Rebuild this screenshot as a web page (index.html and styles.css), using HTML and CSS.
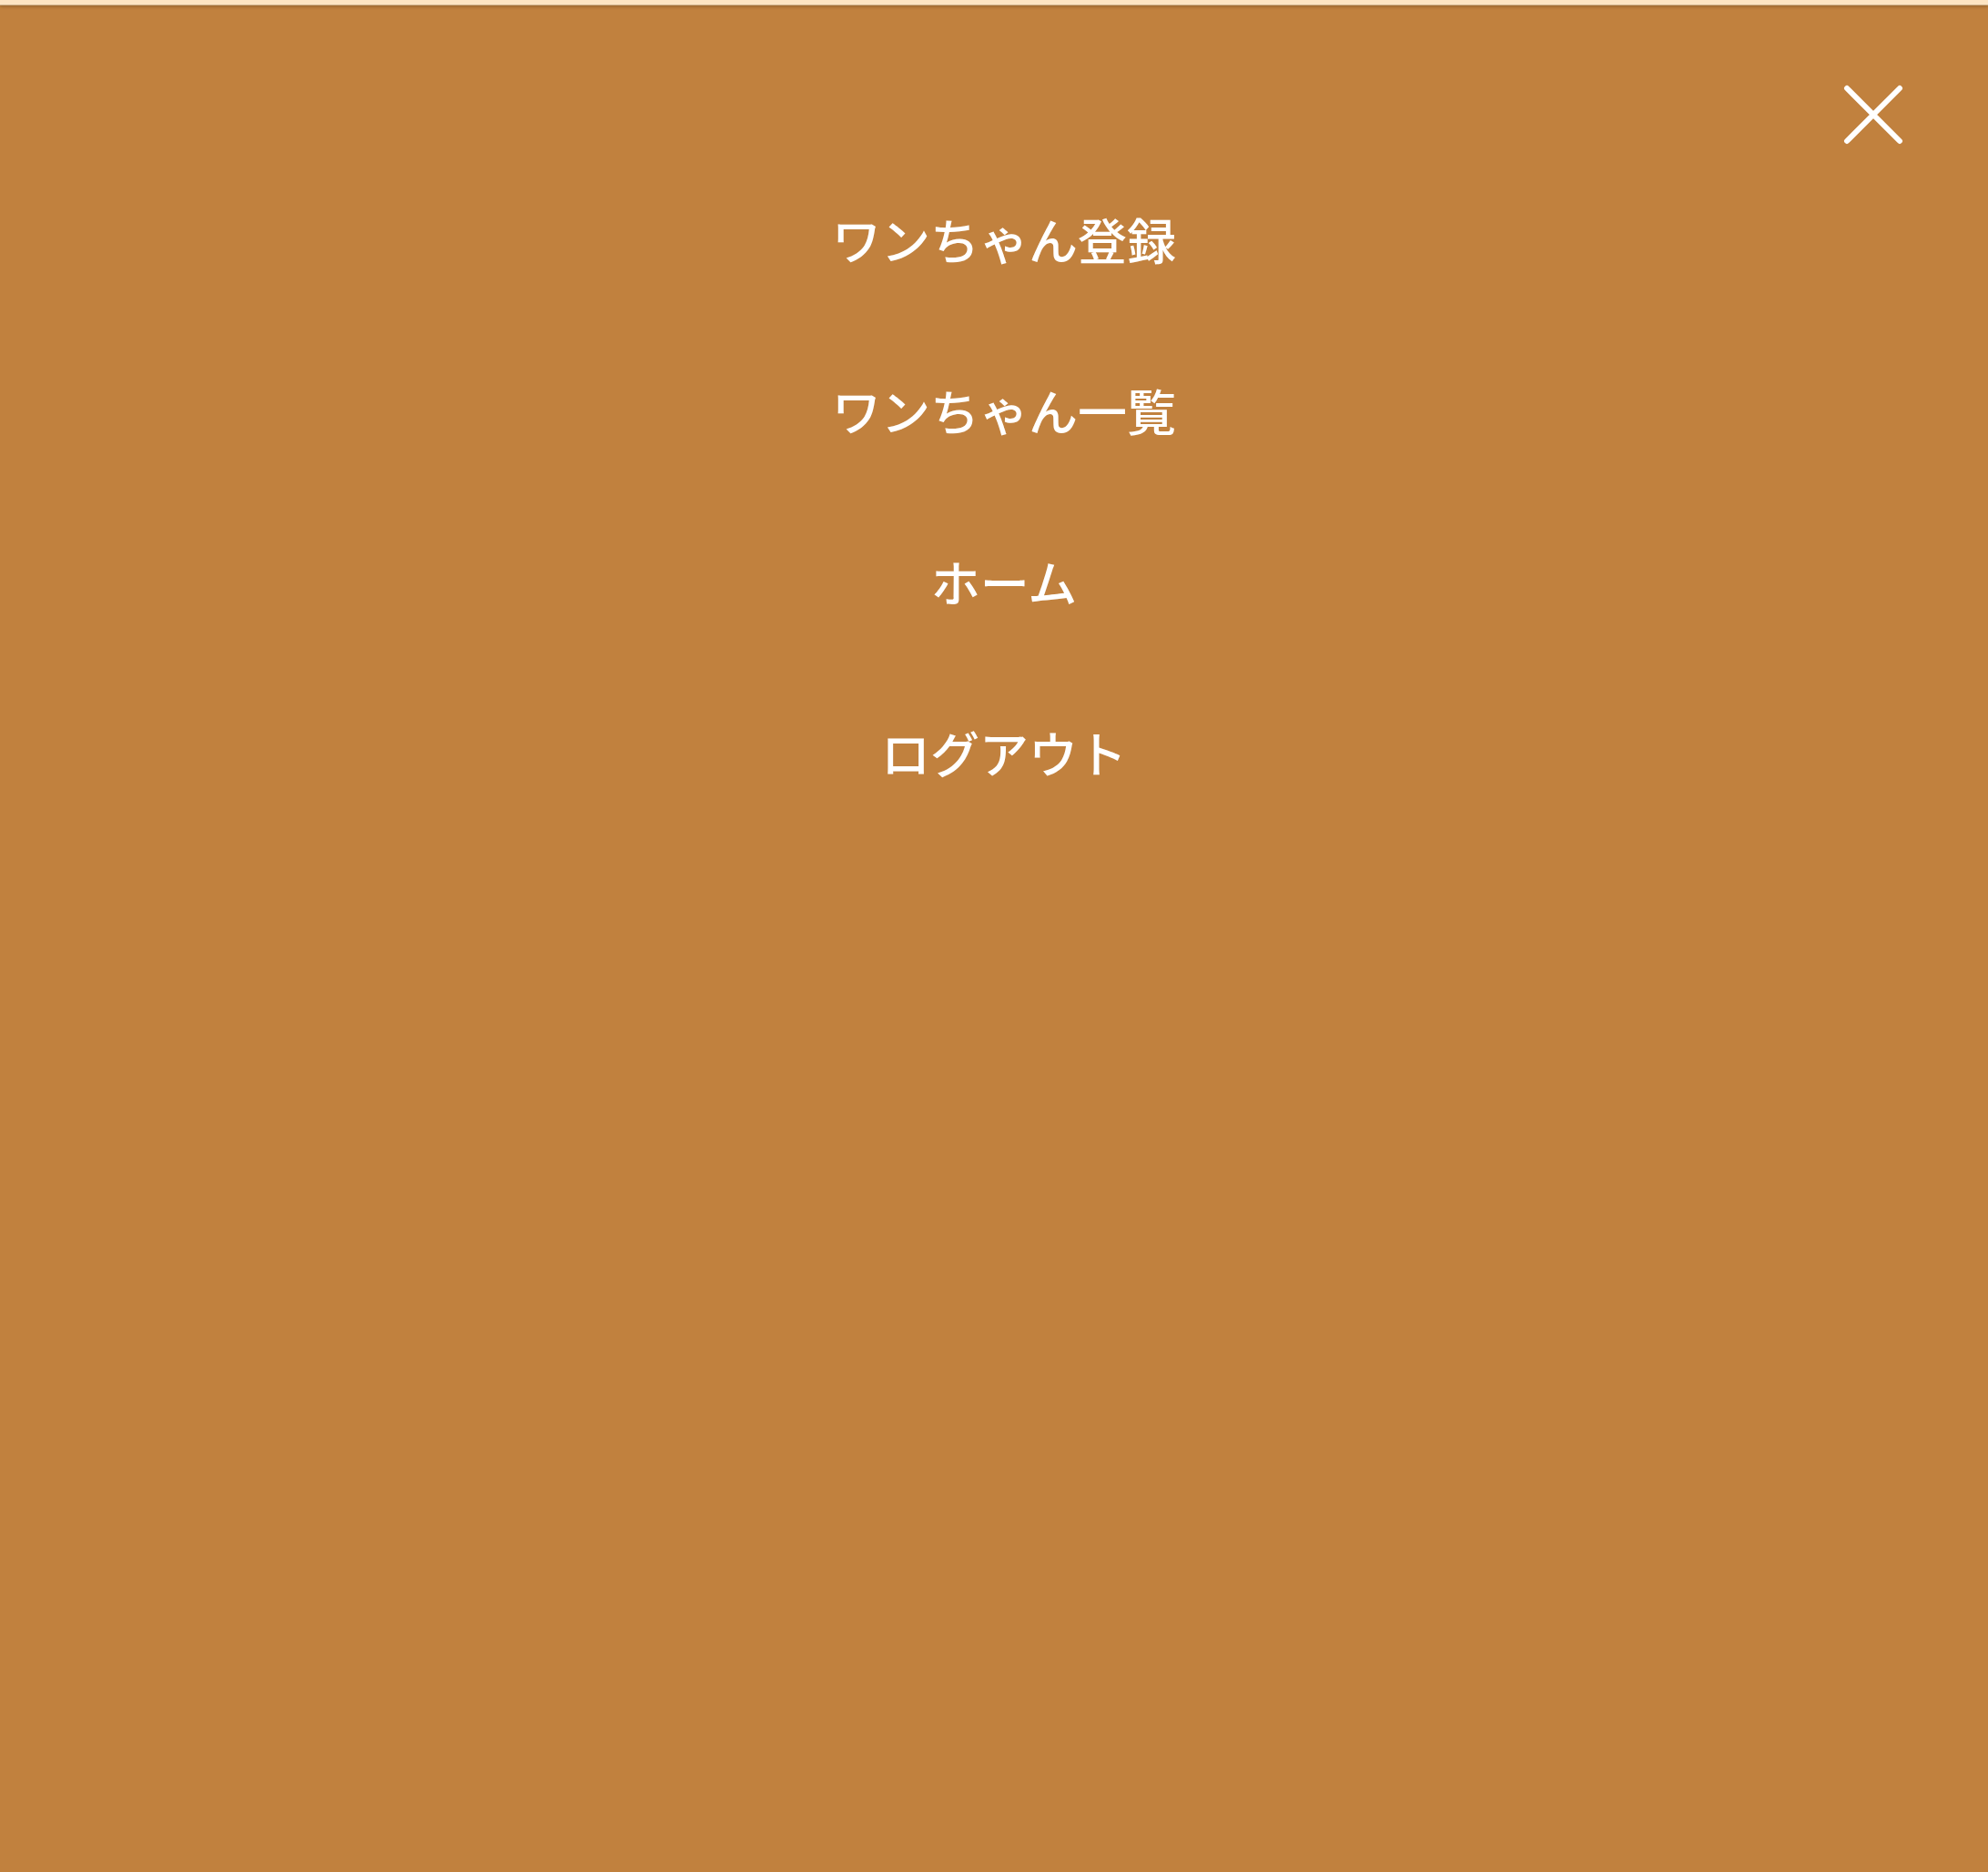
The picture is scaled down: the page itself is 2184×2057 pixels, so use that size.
FILE: index.html
```html
<!DOCTYPE html>
<html lang="ja">
<head>
<meta charset="utf-8">
<title>メニュー</title>
<link rel="stylesheet" href="styles.css">
</head>
<body>
<div class="topbar"></div>
<div class="drawer">
  <button class="close" aria-label="閉じる">
    <svg viewBox="0 0 66 66" width="66" height="66"><path d="M4 4 L62 62 M62 4 L4 62" stroke="#fff" stroke-width="6" stroke-linecap="round" fill="none"/></svg>
  </button>
  <ul class="menu">
    <li><a href="#">ワンちゃん登録</a></li>
    <li><a href="#">ワンちゃん一覧</a></li>
    <li><a href="#">ホーム</a></li>
    <li><a href="#">ログアウト</a></li>
  </ul>
</div>
</body>
</html>
```
FILE: styles.css
```css
html, body {
  margin: 0;
  padding: 0;
  height: 100%;
}
body {
  background: #c1813e;
  font-family: "Noto Sans CJK JP", "Noto Sans", sans-serif;
  overflow: hidden;
}
.topbar {
  height: 5px;
  background: #fde4c2;
  border-bottom: 1px solid #cdb08a;
  box-shadow: 0 2px 3px rgba(120, 80, 30, 0.45);
  position: relative;
  z-index: 1;
}
.drawer {
  position: relative;
  min-height: calc(100% - 6px);
}
.close {
  position: absolute;
  top: 87px;
  right: 93px;
  width: 66px;
  height: 66px;
  padding: 0;
  border: 0;
  background: none;
  cursor: pointer;
}
.close svg {
  display: block;
}
.menu {
  list-style: none;
  margin: 0;
  padding: 163px 0 0 22px;
  display: flex;
  flex-direction: column;
  align-items: center;
}
.menu li {
  height: 188px;
  line-height: 188px;
  font-size: 54px;
  font-weight: 500;
  text-align: center;
}
.menu a {
  color: #fff;
  text-decoration: none;
}
```
